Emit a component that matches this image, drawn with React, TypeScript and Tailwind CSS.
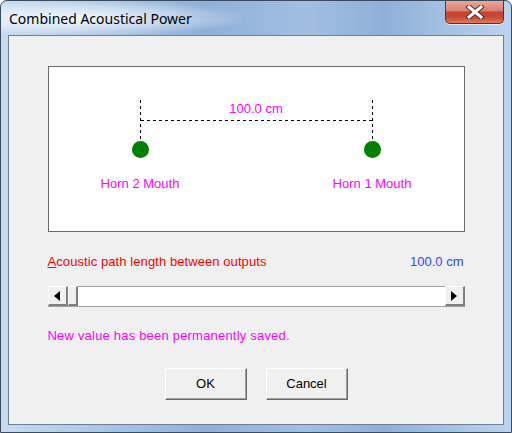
import React from "react";

const sans = "font-['Liberation_Sans',Arial,sans-serif]";

function CloseButton() {
  return (
    <div className="absolute right-[7px] top-0 w-[59px] h-[23px] rounded-b-[5px] border border-t-0 border-[#6d2a22] bg-[linear-gradient(to_bottom,#e9a99c_0%,#d8806f_45%,#c4442f_50%,#c74b35_75%,#e07a60_100%)] flex items-center justify-center shadow-[0_1px_0_rgba(255,255,255,0.6)]">
      <svg width="20" height="14" viewBox="0 0 20 14">
        <path d="M4 2 L16 12 M16 2 L4 12" stroke="#4a2a26" strokeWidth="5" strokeLinecap="square" />
        <path d="M4 2 L16 12 M16 2 L4 12" stroke="#ffffff" strokeWidth="3" strokeLinecap="square" />
      </svg>
    </div>
  );
}

function Diagram() {
  return (
    <svg width="415" height="164" className="block">
      <g stroke="#000" strokeWidth="1" strokeDasharray="3 3" shapeRendering="crispEdges">
        <line x1="91.5" y1="33" x2="91.5" y2="74" />
        <line x1="323.5" y1="33" x2="323.5" y2="74" />
        <line x1="92" y1="53.5" x2="323" y2="53.5" />
      </g>
      <circle cx="91.5" cy="82.5" r="8.5" fill="#008000" />
      <circle cx="323.5" cy="82.5" r="8.5" fill="#008000" />
      <g fill="#ff00ff" fontFamily="Liberation Sans, Arial, sans-serif" fontSize="13" textAnchor="middle">
        <text x="207" y="46">100.0 cm</text>
        <text x="91" y="121">Horn 2 Mouth</text>
        <text x="323" y="121">Horn 1 Mouth</text>
      </g>
    </svg>
  );
}

function ScrollButton({ dir }: { dir: "left" | "right" }) {
  return (
    <div className="w-[20px] h-full bg-[#f0f0f0] border-t border-l border-t-white border-l-white border-b-2 border-r-2 border-b-[#808080] border-r-[#808080] flex items-center justify-center">
      <svg width="6" height="10" viewBox="0 0 6 10">
        {dir === "left" ? <path d="M6 0 L0 5 L6 10 Z" fill="#000" /> : <path d="M0 0 L6 5 L0 10 Z" fill="#000" />}
      </svg>
    </div>
  );
}

function DlgButton({ label }: { label: string }) {
  return (
    <button className="w-[82px] h-[32px] bg-[#f0f0f0] border border-t-white border-l-white border-b-[#696969] border-r-[#696969] shadow-[inset_-1px_-1px_0_#a0a0a0] text-[13px] text-black">
      {label}
    </button>
  );
}

export default function App() {
  return (
    <div className={`relative w-[512px] h-[433px] overflow-hidden rounded-t-[7px] border border-[#3b4a5d] bg-[linear-gradient(to_right,#c7dbf0_0%,#a9c6e6_20%,#8fb0d8_40%,#a2bfe2_60%,#8eb0d8_75%,#bcd3ee_100%)] ${sans}`}>
      <div className="absolute left-0 top-0 w-[240px] h-[34px] bg-[radial-gradient(ellipse_at_30%_50%,rgba(255,255,255,0.85)_0%,rgba(255,255,255,0.4)_45%,rgba(255,255,255,0)_75%)]" />
      <div className="relative h-[34px] pl-[8px] flex items-center">
        <span className="font-['Noto_Sans','Open_Sans',sans-serif] text-[14px] text-black pt-[1px]">Combined Acoustical Power</span>
      </div>
      <CloseButton />
      <div className="relative ml-[7px] w-[496px] h-[390px] border border-[#6e7f93] bg-[#f0f0f0] flex flex-col items-center">
        <div className="mt-[30px] w-[417px] h-[166px] border border-[#6b6b6b] bg-white">
          <Diagram />
        </div>
        <div className="mt-[22px] w-[417px] flex justify-between text-[13px] leading-[16px]">
          <span className="text-[#ff0000] tracking-[0.08px]">
            <span className="underline">A</span>coustic path length between outputs
          </span>
          <span className="text-[#2a46ff] pr-[1px]">100.0 cm</span>
        </div>
        <div className="mt-[16px] w-[417px] h-[21px] flex border-b border-[#a0a0a0]">
          <ScrollButton dir="left" />
          <div className="w-[10px] h-full bg-[#f0f0f0] border-t border-l border-white border-b-2 border-r-2 border-b-[#808080] border-r-[#808080]" />
          <div className="flex-1 bg-white border-t border-[#a0a0a0]" />
          <ScrollButton dir="right" />
        </div>
        <div className="mt-[21px] w-[417px] text-[13px] leading-[16px] text-[#ff00ff] tracking-[0.2px]">New value has been permanently saved.</div>
        <div className="mt-[24px] flex gap-[19px]">
          <DlgButton label="OK" />
          <DlgButton label="Cancel" />
        </div>
      </div>
    </div>
  );
}
